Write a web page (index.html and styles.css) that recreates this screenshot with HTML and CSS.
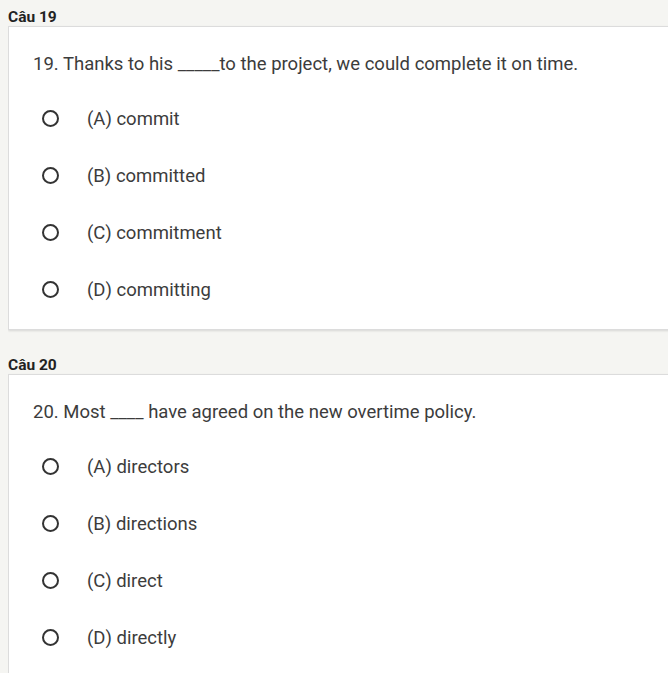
FILE: index.html
```html
<!DOCTYPE html>
<html>
<head>
<meta charset="utf-8">
<link rel="stylesheet" href="styles.css">
</head>
<body>
<section class="question">
  <div class="qhead">Câu 19</div>
  <div class="card">
    <div class="qtext">19. Thanks to his _____to the project, we could complete it on time.</div>
    <ul class="options">
      <li class="option"><span class="radio"></span><span class="label">(A) commit</span></li>
      <li class="option"><span class="radio"></span><span class="label">(B) committed</span></li>
      <li class="option"><span class="radio"></span><span class="label">(C) commitment</span></li>
      <li class="option"><span class="radio"></span><span class="label">(D) committing</span></li>
    </ul>
  </div>
</section>
<section class="question">
  <div class="qhead">Câu 20</div>
  <div class="card">
    <div class="qtext">20. Most ____ have agreed on the new overtime policy.</div>
    <ul class="options">
      <li class="option"><span class="radio"></span><span class="label">(A) directors</span></li>
      <li class="option"><span class="radio"></span><span class="label">(B) directions</span></li>
      <li class="option"><span class="radio"></span><span class="label">(C) direct</span></li>
      <li class="option"><span class="radio"></span><span class="label">(D) directly</span></li>
    </ul>
  </div>
</section>
</body>
</html>
```
FILE: styles.css
```css
html {
  overflow: hidden;
  background: #f5f5f2;
}
body {
  margin: 8px 0 0 8px;
  font-family: Roboto, "Liberation Sans", sans-serif;
  color: #3c3c3c;
}
.question + .question {
  margin-top: 26px;
}
.qhead {
  font-size: 15.5px;
  font-weight: 700;
  line-height: 18px;
  height: 18px;
  color: #222;
}
.card {
  background: #fff;
  border: 1px solid #dcdcdc;
  border-right: none;
  box-shadow: 0 1px 2px rgba(0, 0, 0, 0.12);
  margin-right: -20px;
  padding: 25px 0 11px 24px;
}
.qtext {
  font-size: 18.5px;
  line-height: 24px;
  height: 24px;
  margin-bottom: 14px;
}
.options {
  list-style: none;
  margin: 0;
  padding: 0;
}
.option {
  display: flex;
  align-items: center;
  height: 57px;
  font-size: 18.5px;
}
.radio {
  box-sizing: border-box;
  width: 17px;
  height: 17px;
  border: 2px solid #333;
  border-radius: 50%;
  margin-left: 9px;
  margin-right: 28px;
  flex: none;
}
.label {
  line-height: 24px;
}
```
